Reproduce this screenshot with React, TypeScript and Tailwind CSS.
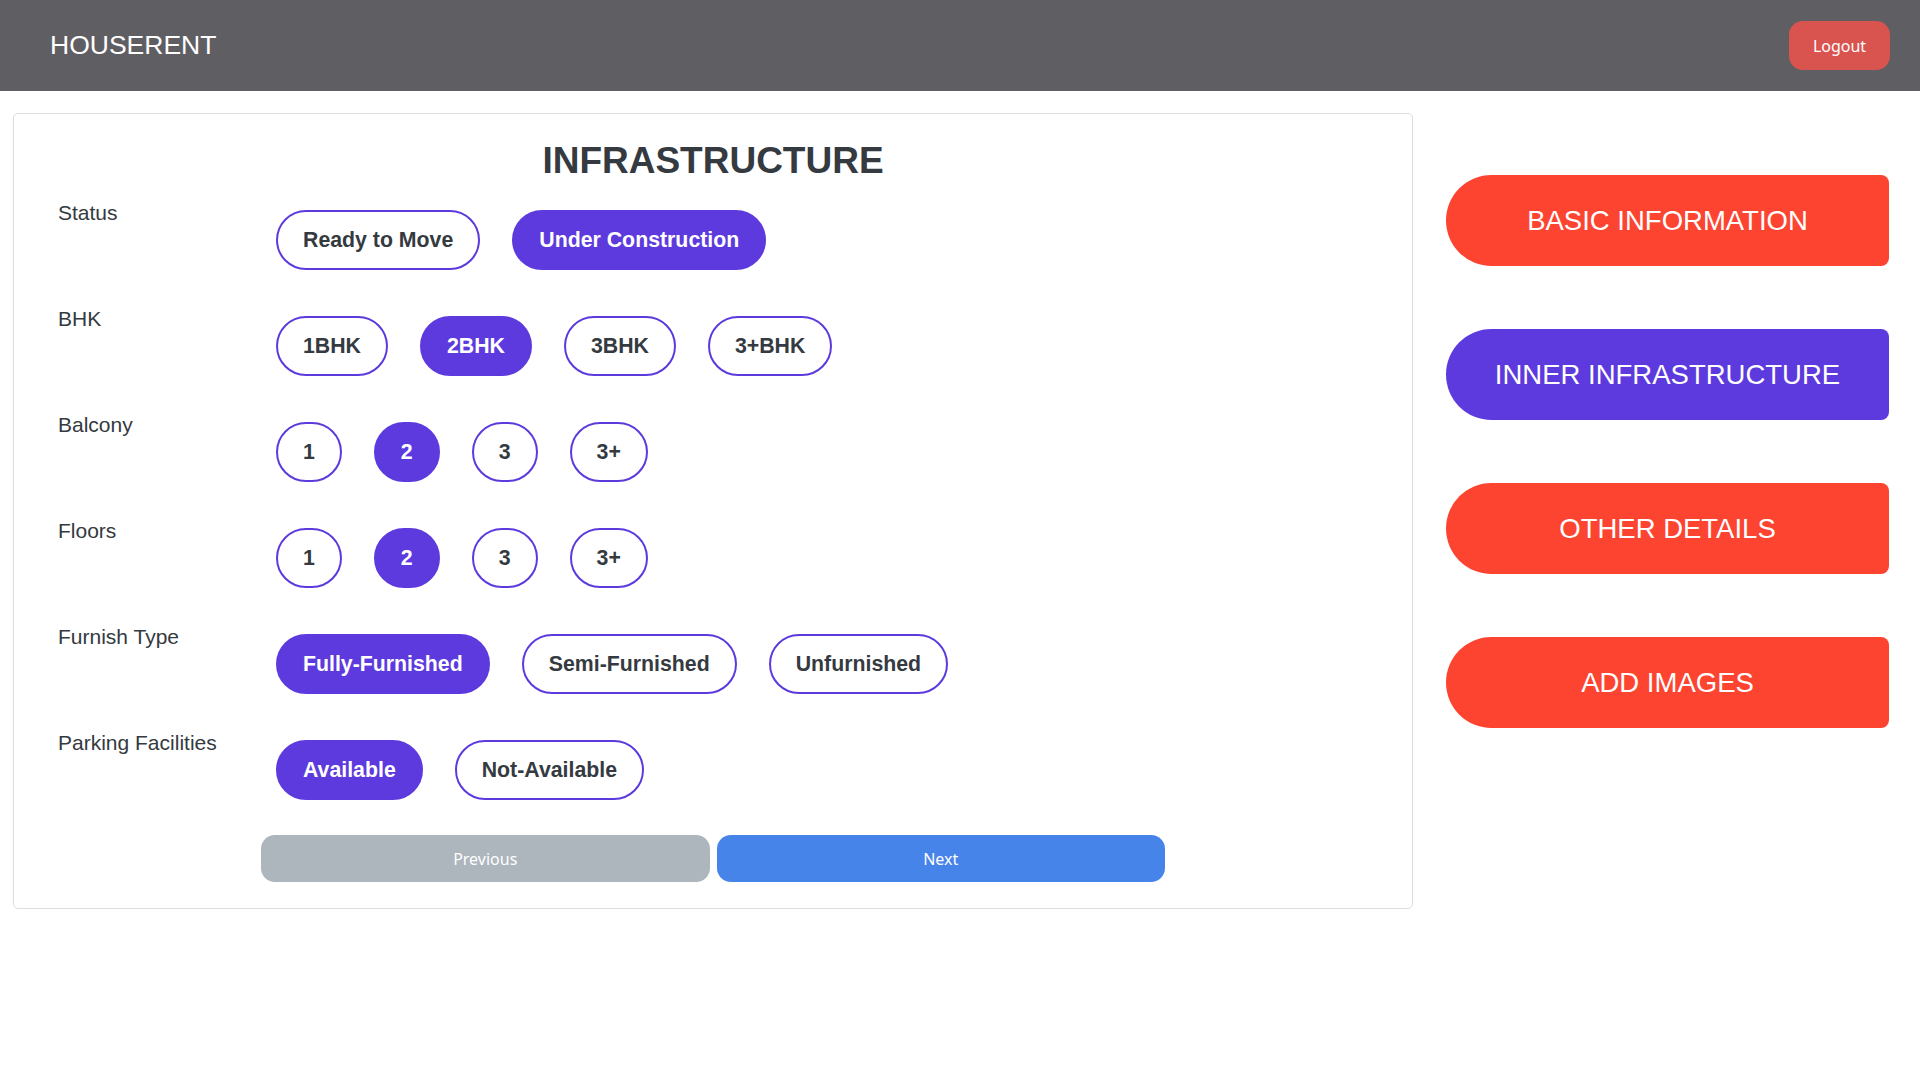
import React from "react";

const PURPLE_ACTIVE = "bg-[#5d3ade] text-white";
const PURPLE_IDLE = "bg-white text-[#343a40]";

function Opt({ label, active }: { label: string; active?: boolean }) {
  return (
    <button
      className={
        "h-[60px] px-[25px] rounded-full border-2 border-[#5d3ade] text-[21.3px] font-bold leading-[24px] whitespace-nowrap " +
        (active ? PURPLE_ACTIVE : PURPLE_IDLE)
      }
    >
      {label}
    </button>
  );
}

function Row({ label, options, active }: { label: string; options: string[]; active: number }) {
  return (
    <div className="flex items-start">
      <div className="w-[218px] shrink-0 text-[21px] leading-[24px] text-[#343a40]">{label}</div>
      <div className="flex gap-[32px] pt-[9px]">
        {options.map((o, i) => (
          <Opt key={o} label={o} active={i === active} />
        ))}
      </div>
    </div>
  );
}

function SideBtn({ label, active }: { label: string; active?: boolean }) {
  return (
    <button
      className={
        "h-[91px] w-[443px] rounded-l-[46px] rounded-r-[8px] text-[27.5px] text-white leading-none " +
        (active ? "bg-[#5d3ade]" : "bg-[#fd4431]")
      }
    >
      {label}
    </button>
  );
}

export default function App() {
  return (
    <div className="min-h-screen bg-white font-['Liberation_Sans',Arial,sans-serif]">
      <header className="h-[91px] bg-[#5f5e63] flex items-center justify-between pl-[50px] pr-[30px]">
        <div className="text-white text-[26.5px] leading-none">HOUSERENT</div>
        <button className="h-[49px] w-[101px] rounded-[14px] bg-[#d9534f] text-white text-[16px] font-['Noto_Sans',sans-serif]">
          Logout
        </button>
      </header>

      <div className="flex items-start">
        <div className="ml-[13px] mt-[22px] w-[1400px] border border-[#dedede] rounded-[5px] pt-[24px] pb-[26px] px-[44px]">
          <h1 className="text-center text-[37px] leading-[46px] font-bold text-[#343a40] mb-[17px]">
            INFRASTRUCTURE
          </h1>
          <div className="flex flex-col gap-[37px]">
            <Row label="Status" options={["Ready to Move", "Under Construction"]} active={1} />
            <Row label="BHK" options={["1BHK", "2BHK", "3BHK", "3+BHK"]} active={1} />
            <Row label="Balcony" options={["1", "2", "3", "3+"]} active={1} />
            <Row label="Floors" options={["1", "2", "3", "3+"]} active={1} />
            <Row label="Furnish Type" options={["Fully-Furnished", "Semi-Furnished", "Unfurnished"]} active={0} />
            <Row label="Parking Facilities" options={["Available", "Not-Available"]} active={0} />
          </div>
          <div className="mt-[35px] mx-auto w-[904px] flex gap-[7px] font-['Noto_Sans',sans-serif]">
            <button className="flex-1 h-[47px] rounded-[14px] bg-[#adb5bd] text-white text-[16px]">Previous</button>
            <button className="flex-1 h-[47px] rounded-[14px] bg-[#4784ea] text-white text-[16px]">Next</button>
          </div>
        </div>

        <div className="ml-[33px] pt-[84px] flex flex-col gap-[63px]">
          <SideBtn label="BASIC INFORMATION" />
          <SideBtn label="INNER INFRASTRUCTURE" active />
          <SideBtn label="OTHER DETAILS" />
          <SideBtn label="ADD IMAGES" />
        </div>
      </div>
    </div>
  );
}
